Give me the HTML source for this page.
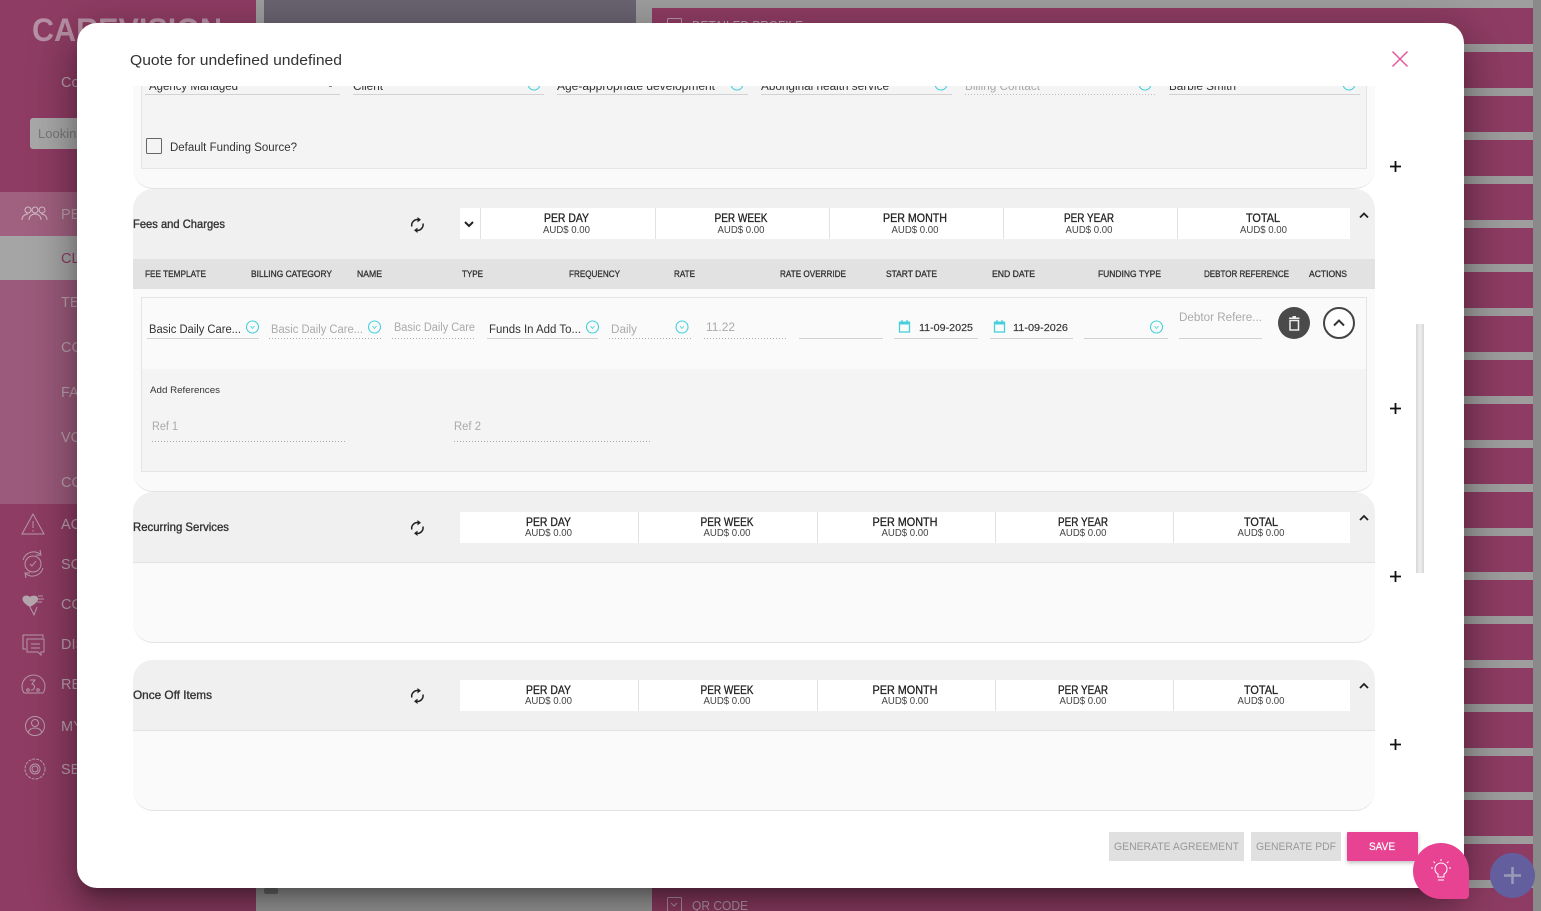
<!DOCTYPE html>
<html lang="en">
<head>
<meta charset="utf-8">
<title>Quote for undefined undefined</title>
<style>
html,body{margin:0;padding:0;width:1541px;height:911px;overflow:hidden;background:#8e3c63;}
body{position:relative;font-family:"Liberation Sans",sans-serif;}
.a{position:absolute;}
svg{position:absolute;left:0;top:0;}
text{font-family:"Liberation Sans",sans-serif;}
.t{fill:#333;font-size:11.5px;}
.g{fill:#aaa;font-size:11.5px;}
.h{fill:#333;font-size:9px;stroke:#333;stroke-width:.3px;}
.p{fill:#222;font-size:12px;stroke:#222;stroke-width:.3px;text-anchor:middle;}
.v{fill:#444;font-size:10px;text-anchor:middle;}
.s{fill:#b9a0ad;font-size:14.5px;}
.c{fill:none;stroke:#45d0dc;stroke-width:1.1;}
.b{fill:none;stroke:#b59aa8;stroke-width:1;}
</style>
</head>
<body>
<div class="a" style="left:0;top:0;width:256px;height:911px;background:#8e3c63;box-shadow:2px 0 6px rgba(0,0,0,.25)"></div>
<div class="a" style="left:0;top:192px;width:256px;height:44px;background:#a0607f"></div>
<div class="a" style="left:0;top:236px;width:256px;height:44px;background:#a5a5a5"></div>
<div class="a" style="left:0;top:280px;width:256px;height:224px;background:#9b5a7b"></div>
<div class="a" style="left:256px;top:0;width:396px;height:911px;background:#9e9e9e"></div>
<div class="a" style="left:264px;top:0;width:372px;height:24px;background:#6a6371"></div>
<div class="a" style="left:636px;top:0;width:897px;height:911px;background:repeating-linear-gradient(#9e9e9e 0 8px,#8e3c63 8px 44px)"></div>
<div class="a" style="left:636px;top:8px;width:16px;height:903px;background:#9e9e9e"></div>
<div class="a" style="left:1533px;top:0;width:8px;height:911px;background:#8a8a8a"></div>

<svg width="1541" height="911" viewBox="0 0 1541 911">
  <text x="32" y="41" font-size="32" font-weight="700" fill="#b690a4" textLength="190" lengthAdjust="spacingAndGlyphs">CAREVISION</text>
  <text class="s" x="61" y="87">Co</text>
  <rect x="30" y="118" width="70" height="31" rx="3" fill="#a8a8a8"/>
  <text x="38" y="138" font-size="13" fill="#777">Lookin</text>
  <text class="s" x="61" y="219">PEO</text>
  <text x="61" y="263" font-size="14.500" fill="#8e3c63">CLI</text>
  <text class="s" x="61" y="307">TEA</text>
  <text class="s" x="61" y="352">CON</text>
  <text class="s" x="61" y="397">FAM</text>
  <text class="s" x="61" y="442">VOL</text>
  <text class="s" x="61" y="487">CON</text>
  <text class="s" x="61" y="529">ACT</text>
  <text class="s" x="61" y="569">SCH</text>
  <text class="s" x="61" y="609">COM</text>
  <text class="s" x="61" y="649">DIS</text>
  <text class="s" x="61" y="689">REP</text>
  <text class="s" x="61" y="731">MY</text>
  <text class="s" x="61" y="774">SET</text>
  <!-- people -->
  <g class="b" style="stroke:#d0bcc7">
    <circle cx="28" cy="210" r="3"/><circle cx="35" cy="210" r="3"/><circle cx="42" cy="210" r="3"/>
    <path d="M22 220c0-4 3-6 6-6M29 220c0-4 3-6 6-6s6 2 6 6M41 214c3 0 6 2 6 6"/>
  </g>
  <!-- warning -->
  <path class="b" d="M33 514l11 20H22zM33 521v7M33 530v1.500"/>
  <!-- clock -->
  <g class="b"><path d="M23 560a11 11 0 0 1 17-6M43 568a11 11 0 0 1-17 6"/><path d="M40 550l1 5-5 0M26 578l-1-5 5 0"/><circle cx="33" cy="564" r="8"/><path d="M30 564l2 2 4-5"/></g>
  <!-- heart -->
  <path d="M23 597c2-2 5-2 7 0 2-2 7-2 8 1 1 3-4 7-8 9-4-2-9-6-7-10z" fill="#b5a6ad"/>
  <path class="b" d="M38 596h5M38 599h6M37 602h5M30 607l4 8 3-8"/>
  <!-- chat -->
  <path class="b" d="M23 635h20v3M23 635v14h3M27 639h17v13h-3v3l-3-3H27zM31 644h9M31 648h9"/>
  <!-- gauge -->
  <g class="b"><path d="M24 693a11.500 11.500 0 1 1 19 0z"/><path d="M30 680h5l-3 4a3 3 0 1 1-1 6"/><circle cx="28" cy="690" r="1.300"/><circle cx="38" cy="690" r="1.300"/></g>
  <!-- user -->
  <g class="b"><circle cx="35" cy="726" r="9.500"/><circle cx="35" cy="723" r="3.500"/><path d="M28 733c1-4 4-5 7-5s6 1 7 5"/></g>
  <!-- gear -->
  <g class="b" stroke-dasharray="3 1"><circle cx="35" cy="769" r="10"/></g>
  <g class="b"><circle cx="35" cy="769" r="5"/><circle cx="35" cy="769" r="3"/></g>
  <!-- right panel labels -->
  <rect x="667.500" y="18.500" width="14" height="14" rx="1" class="b"/>
  <text x="692" y="30" font-size="13" fill="#b9a0ad" textLength="111" lengthAdjust="spacingAndGlyphs">DETAILED PROFILE</text>
  <rect x="667.500" y="897.500" width="14" height="14" rx="1" class="b"/>
  <path class="b" d="M671 903l3 3 3-3"/>
  <text x="692" y="910" font-size="13" fill="#b9a0ad" textLength="56" lengthAdjust="spacingAndGlyphs">QR CODE</text>
  <rect x="264" y="888" width="14" height="6" rx="2" fill="#707070"/>
</svg>

<!-- modal -->
<div class="a" style="left:77px;top:23px;width:1387px;height:865px;background:#fff;border-radius:20px;box-shadow:0 11px 15px -7px rgba(0,0,0,.3),0 24px 38px 3px rgba(0,0,0,.2),0 9px 46px 8px rgba(0,0,0,.18)"></div>

<!-- section 1 -->
<div class="a" style="left:133px;top:86px;width:1242px;height:102px;background:#fafafa;border-bottom:1px solid #e4e4e4;border-radius:0 0 20px 20px"></div>
<div class="a" style="left:141px;top:86px;width:1224px;height:82px;background:#f4f4f4;border:1px solid #e6e6e6;border-top:0"></div>

<!-- section 2 -->
<div class="a" style="left:133px;top:189px;width:1242px;height:302px;background:#fafafa;border-bottom:1px solid #e4e4e4;border-radius:20px"></div>
<div class="a" style="left:133px;top:189px;width:1242px;height:70px;background:#f0f0f0;border-radius:20px 20px 0 0"></div>
<div class="a" style="left:133px;top:259px;width:1242px;height:30px;background:#e2e2e2"></div>
<div class="a" style="left:141px;top:297px;width:1224px;height:173px;background:#fafafa;border:1px solid #e4e4e4"></div>
<div class="a" style="left:142px;top:369px;width:1224px;height:102px;background:#f4f4f4"></div>
<div class="a" style="left:460px;top:208px;width:890px;height:31px;background:#fff"></div>

<!-- section 3 -->
<div class="a" style="left:133px;top:492px;width:1242px;height:150px;background:#fafafa;border-bottom:1px solid #e4e4e4;border-radius:20px"></div>
<div class="a" style="left:133px;top:492px;width:1242px;height:70px;background:#f0f0f0;border-bottom:1px solid #e2e2e2;border-radius:20px 20px 0 0"></div>
<div class="a" style="left:460px;top:512px;width:890px;height:31px;background:#fff"></div>

<!-- section 4 -->
<div class="a" style="left:133px;top:660px;width:1242px;height:150px;background:#fafafa;border-bottom:1px solid #e4e4e4;border-radius:20px"></div>
<div class="a" style="left:133px;top:660px;width:1242px;height:70px;background:#f0f0f0;border-bottom:1px solid #e2e2e2;border-radius:20px 20px 0 0"></div>
<div class="a" style="left:460px;top:680px;width:890px;height:31px;background:#fff"></div>

<!-- scrollbar -->
<div class="a" style="left:1416px;top:324px;width:8px;height:249px;background:linear-gradient(90deg,#d6d6d6,#efefef 50%,#d6d6d6)"></div>

<!-- buttons -->
<div class="a" style="left:1109px;top:832px;width:135px;height:29px;background:#e0e0e0"></div>
<div class="a" style="left:1251px;top:832px;width:90px;height:29px;background:#e0e0e0"></div>
<div class="a" style="left:1347px;top:832px;width:71px;height:29px;background:#e84393;border-radius:1px;box-shadow:0 2px 4px rgba(0,0,0,.25)"></div>
<div class="a" style="left:1490px;top:853px;width:45px;height:45px;border-radius:50%;background:#635f9f"></div>
<div class="a" style="left:1413px;top:843px;width:56px;height:56px;background:#e84393;border-radius:50% 50% 4px 50%"></div>

<svg width="1541" height="911" viewBox="0 0 1541 911">
  <defs><clipPath id="cl"><rect x="133" y="86" width="1242" height="20"/></clipPath></defs>

  <text x="130" y="65" font-size="14.500" fill="#333" textLength="212" lengthAdjust="spacingAndGlyphs">Quote for undefined undefined</text>
  <path d="M1392.500 51.500l15 15M1407.500 51.500l-15 15" stroke="#e2569b" stroke-width="1.500" fill="none"/>

  <!-- section 1 clipped fields -->
  <g clip-path="url(#cl)">
    <text class="t" x="149" y="90" textLength="89" lengthAdjust="spacingAndGlyphs">Agency Managed</text>
    <text class="t" x="353" y="90" textLength="30" lengthAdjust="spacingAndGlyphs">Client</text>
    <text class="t" x="557" y="90" textLength="158" lengthAdjust="spacingAndGlyphs">Age-appropriate development</text>
    <text class="t" x="761" y="90" textLength="128" lengthAdjust="spacingAndGlyphs">Aboriginal health service</text>
    <text class="g" x="965" y="90" textLength="75" lengthAdjust="spacingAndGlyphs">Billing Contact</text>
    <text class="t" x="1169" y="90" textLength="67" lengthAdjust="spacingAndGlyphs">Barbie Smith</text>
    <circle class="c" cx="534" cy="84" r="6"/><circle class="c" cx="737" cy="84" r="6"/><circle class="c" cx="941" cy="84" r="6"/><circle class="c" cx="1145" cy="84" r="6"/><circle class="c" cx="1349" cy="84" r="6"/>
    <path d="M329 86.500h3" stroke="#888" fill="none"/>
  </g>
  <g fill="none" stroke="#d2d2d2">
    <path d="M145 94.500h195M353 94.500h191M557 94.500h191M761 94.500h191M1169 94.500h191"/>
    <path d="M965 94.500h191" stroke-dasharray="1 2" stroke="#bbb"/>
  </g>
  <rect x="146.500" y="138.500" width="15" height="15" rx="1" fill="none" stroke="#666"/>
  <text class="t" x="170" y="151" textLength="127" lengthAdjust="spacingAndGlyphs">Default Funding Source?</text>

  <!-- section 2 header -->
  <text x="133" y="228" font-size="12" fill="#333" stroke="#333" stroke-width=".35" textLength="92" lengthAdjust="spacingAndGlyphs">Fees and Charges</text>
  <g id="sync" fill="none" stroke="#222" stroke-width="1.500">
    <path d="M411.800 226.500a5.800 5.800 0 0 1 7-6.800M423 223.500a5.800 5.800 0 0 1-7 6.800"/>
    <path d="M417.500 217l3.500 2.800-3.500 2.600zM417.500 233l-3.500-2.800 3.500-2.600z" fill="#222" stroke="none"/>
  </g>
  <path d="M465 222l4 4 4-4" fill="none" stroke="#222" stroke-width="2"/>
  <path d="M480.500 208v31M655.500 208v31M829.500 208v31M1003.500 208v31M1177.500 208v31" stroke="#e2e2e2"/>
  <text class="p" x="566.500" y="222" textLength="45" lengthAdjust="spacingAndGlyphs">PER DAY</text>
  <text class="v" x="566.500" y="233" textLength="47" lengthAdjust="spacingAndGlyphs">AUD$ 0.00</text>
  <text class="p" x="741" y="222" textLength="53" lengthAdjust="spacingAndGlyphs">PER WEEK</text>
  <text class="v" x="741" y="233" textLength="47" lengthAdjust="spacingAndGlyphs">AUD$ 0.00</text>
  <text class="p" x="915" y="222" textLength="64" lengthAdjust="spacingAndGlyphs">PER MONTH</text>
  <text class="v" x="915" y="233" textLength="47" lengthAdjust="spacingAndGlyphs">AUD$ 0.00</text>
  <text class="p" x="1089" y="222" textLength="50" lengthAdjust="spacingAndGlyphs">PER YEAR</text>
  <text class="v" x="1089" y="233" textLength="47" lengthAdjust="spacingAndGlyphs">AUD$ 0.00</text>
  <text class="p" x="1263" y="222" textLength="34" lengthAdjust="spacingAndGlyphs">TOTAL</text>
  <text class="v" x="1263.500" y="233" textLength="47" lengthAdjust="spacingAndGlyphs">AUD$ 0.00</text>
  <path d="M1360 217.500l4-4 4 4" fill="none" stroke="#222" stroke-width="1.800"/>

  <!-- column headers -->
  <text class="h" x="145" y="277" textLength="61" lengthAdjust="spacingAndGlyphs">FEE TEMPLATE</text>
  <text class="h" x="251" y="277" textLength="81" lengthAdjust="spacingAndGlyphs">BILLING CATEGORY</text>
  <text class="h" x="357" y="277" textLength="25" lengthAdjust="spacingAndGlyphs">NAME</text>
  <text class="h" x="462" y="277" textLength="21" lengthAdjust="spacingAndGlyphs">TYPE</text>
  <text class="h" x="569" y="277" textLength="51" lengthAdjust="spacingAndGlyphs">FREQUENCY</text>
  <text class="h" x="674" y="277" textLength="21" lengthAdjust="spacingAndGlyphs">RATE</text>
  <text class="h" x="780" y="277" textLength="66" lengthAdjust="spacingAndGlyphs">RATE OVERRIDE</text>
  <text class="h" x="886" y="277" textLength="51" lengthAdjust="spacingAndGlyphs">START DATE</text>
  <text class="h" x="992" y="277" textLength="43" lengthAdjust="spacingAndGlyphs">END DATE</text>
  <text class="h" x="1098" y="277" textLength="63" lengthAdjust="spacingAndGlyphs">FUNDING TYPE</text>
  <text class="h" x="1204" y="277" textLength="85" lengthAdjust="spacingAndGlyphs">DEBTOR REFERENCE</text>
  <text class="h" x="1309" y="277" textLength="38" lengthAdjust="spacingAndGlyphs">ACTIONS</text>

  <!-- row -->
  <text class="t" x="149" y="333" textLength="92" lengthAdjust="spacingAndGlyphs">Basic Daily Care...</text>
  <text class="g" x="271" y="333" textLength="92" lengthAdjust="spacingAndGlyphs">Basic Daily Care...</text>
  <text class="g" x="394" y="331" textLength="81" lengthAdjust="spacingAndGlyphs">Basic Daily Care</text>
  <text class="t" x="489" y="333" textLength="92" lengthAdjust="spacingAndGlyphs">Funds In Add To...</text>
  <text class="g" x="611" y="333" textLength="26" lengthAdjust="spacingAndGlyphs">Daily</text>
  <text class="g" x="706" y="331" textLength="29" lengthAdjust="spacingAndGlyphs">11.22</text>
  <text x="919" y="331" font-size="10.500" fill="#333" stroke="#333" stroke-width=".15" textLength="54" lengthAdjust="spacingAndGlyphs">11-09-2025</text>
  <text x="1013" y="331" font-size="10.500" fill="#333" stroke="#333" stroke-width=".15" textLength="55" lengthAdjust="spacingAndGlyphs">11-09-2026</text>
  <text class="g" x="1179" y="321" textLength="83" lengthAdjust="spacingAndGlyphs">Debtor Refere...</text>
  <g fill="none" stroke="#d2d2d2">
    <path d="M147 338.500h112M487 338.500h111M799 338.500h84M894 338.500h84M990 338.500h83M1084 338.500h84M1179 338.500h83"/>
  </g>
  <g fill="none" stroke="#aaa" stroke-dasharray="1 2">
    <path d="M269 338.500h112M392 338.500h84M609 338.500h82M704 338.500h84M152 441.500h195M454 441.500h196"/>
  </g>
  <g class="c">
    <circle cx="252.500" cy="327" r="6"/><circle cx="374.500" cy="327" r="6"/><circle cx="592.500" cy="327" r="6"/><circle cx="682" cy="327" r="6"/><circle cx="1156.500" cy="327" r="6"/>
  </g>
  <path d="M250.500 326l2 2.500 2-2.500M372.500 326l2 2.500 2-2.500M590.500 326l2 2.500 2-2.500M680 326l2 2.500 2-2.500M1154.500 326l2 2.500 2-2.500" fill="none" stroke="#45d0dc" stroke-width=".8"/>
  <g fill="none" stroke="#45d0dc" stroke-width="1.300">
    <rect x="899.500" y="322.500" width="10" height="9.500"/><path d="M899 323h11" stroke-width="3"/><path d="M902 320v2M907 320v2"/>
    <rect x="994.500" y="322.500" width="10" height="9.500"/><path d="M994 323h11" stroke-width="3"/><path d="M997 320v2M1002 320v2"/>
  </g>
  <circle cx="1294" cy="323" r="16" fill="#4a4a4a"/>
  <path d="M1290 320.500h8.500v9.500h-8.500zM1289 318.300h10.500M1292.500 316.800h3.500" fill="none" stroke="#eee" stroke-width="1.500"/>
  <circle cx="1339" cy="323" r="15" fill="#fff" stroke="#444" stroke-width="2"/>
  <path d="M1334 325.500l5-5 5 5" fill="none" stroke="#333" stroke-width="2"/>

  <text x="150" y="393" font-size="9.500" fill="#333" textLength="70" lengthAdjust="spacingAndGlyphs">Add References</text>
  <text class="g" x="152" y="430" textLength="26" lengthAdjust="spacingAndGlyphs">Ref 1</text>
  <text class="g" x="454" y="430" textLength="27" lengthAdjust="spacingAndGlyphs">Ref 2</text>

  <!-- section 3 -->
  <text x="133" y="531" font-size="12" fill="#333" stroke="#333" stroke-width=".35" textLength="96" lengthAdjust="spacingAndGlyphs">Recurring Services</text>
  <use href="#sync" y="303"/>
  <path d="M638.500 512v31M817.500 512v31M995.500 512v31M1173.500 512v31" stroke="#e2e2e2"/>
  <text class="p" x="548.500" y="526" textLength="45" lengthAdjust="spacingAndGlyphs">PER DAY</text>
  <text class="v" x="548.500" y="536" textLength="47" lengthAdjust="spacingAndGlyphs">AUD$ 0.00</text>
  <text class="p" x="727" y="526" textLength="53" lengthAdjust="spacingAndGlyphs">PER WEEK</text>
  <text class="v" x="727" y="536" textLength="47" lengthAdjust="spacingAndGlyphs">AUD$ 0.00</text>
  <text class="p" x="905" y="526" textLength="65" lengthAdjust="spacingAndGlyphs">PER MONTH</text>
  <text class="v" x="905" y="536" textLength="47" lengthAdjust="spacingAndGlyphs">AUD$ 0.00</text>
  <text class="p" x="1083" y="526" textLength="50" lengthAdjust="spacingAndGlyphs">PER YEAR</text>
  <text class="v" x="1083" y="536" textLength="47" lengthAdjust="spacingAndGlyphs">AUD$ 0.00</text>
  <text class="p" x="1261" y="526" textLength="34" lengthAdjust="spacingAndGlyphs">TOTAL</text>
  <text class="v" x="1261" y="536" textLength="47" lengthAdjust="spacingAndGlyphs">AUD$ 0.00</text>
  <path d="M1360 520l4-4 4 4" fill="none" stroke="#222" stroke-width="1.800"/>

  <!-- section 4 -->
  <text x="133" y="699" font-size="12" fill="#333" stroke="#333" stroke-width=".35" textLength="79" lengthAdjust="spacingAndGlyphs">Once Off Items</text>
  <use href="#sync" y="471"/>
  <path d="M638.500 680v31M817.500 680v31M995.500 680v31M1173.500 680v31" stroke="#e2e2e2"/>
  <text class="p" x="548.500" y="694" textLength="45" lengthAdjust="spacingAndGlyphs">PER DAY</text>
  <text class="v" x="548.500" y="704" textLength="47" lengthAdjust="spacingAndGlyphs">AUD$ 0.00</text>
  <text class="p" x="727" y="694" textLength="53" lengthAdjust="spacingAndGlyphs">PER WEEK</text>
  <text class="v" x="727" y="704" textLength="47" lengthAdjust="spacingAndGlyphs">AUD$ 0.00</text>
  <text class="p" x="905" y="694" textLength="65" lengthAdjust="spacingAndGlyphs">PER MONTH</text>
  <text class="v" x="905" y="704" textLength="47" lengthAdjust="spacingAndGlyphs">AUD$ 0.00</text>
  <text class="p" x="1083" y="694" textLength="50" lengthAdjust="spacingAndGlyphs">PER YEAR</text>
  <text class="v" x="1083" y="704" textLength="47" lengthAdjust="spacingAndGlyphs">AUD$ 0.00</text>
  <text class="p" x="1261" y="694" textLength="34" lengthAdjust="spacingAndGlyphs">TOTAL</text>
  <text class="v" x="1261" y="704" textLength="47" lengthAdjust="spacingAndGlyphs">AUD$ 0.00</text>
  <path d="M1360 688l4-4 4 4" fill="none" stroke="#222" stroke-width="1.800"/>

  <!-- plus signs -->
  <path d="M1390 166.500h11M1395.500 161v11M1390 408.500h11M1395.500 403v11M1390 576.500h11M1395.500 571v11M1390 744.500h11M1395.500 739v11" stroke="#111" stroke-width="1.800" fill="none"/>

  <!-- buttons -->
  <text x="1114" y="850" font-size="11" fill="#999" textLength="125" lengthAdjust="spacingAndGlyphs">GENERATE AGREEMENT</text>
  <text x="1256" y="850" font-size="11" fill="#999" textLength="80" lengthAdjust="spacingAndGlyphs">GENERATE PDF</text>
  <text x="1369" y="850" font-size="11" fill="#fff" stroke="#fff" stroke-width=".2" textLength="26" lengthAdjust="spacingAndGlyphs">SAVE</text>

  <!-- bulb -->
  <g fill="none" stroke="#fff" stroke-width="1">
    <path d="M1438 877h6v-3c2-1 3-3 3-5a6 6 0 0 0-12 0c0 2 1 4 3 5zM1438 880h6"/>
    <path d="M1441 861v-2M1433 868h-2M1451 868h-2M1435 863l-1.500-1.500M1447 863l1.500-1.500"/>
  </g>
  <!-- purple plus -->
  <path d="M1504 875.500h17M1512.500 867v17" stroke="#9a9ab5" stroke-width="2.500" fill="none"/>
</svg>
</body>
</html>
